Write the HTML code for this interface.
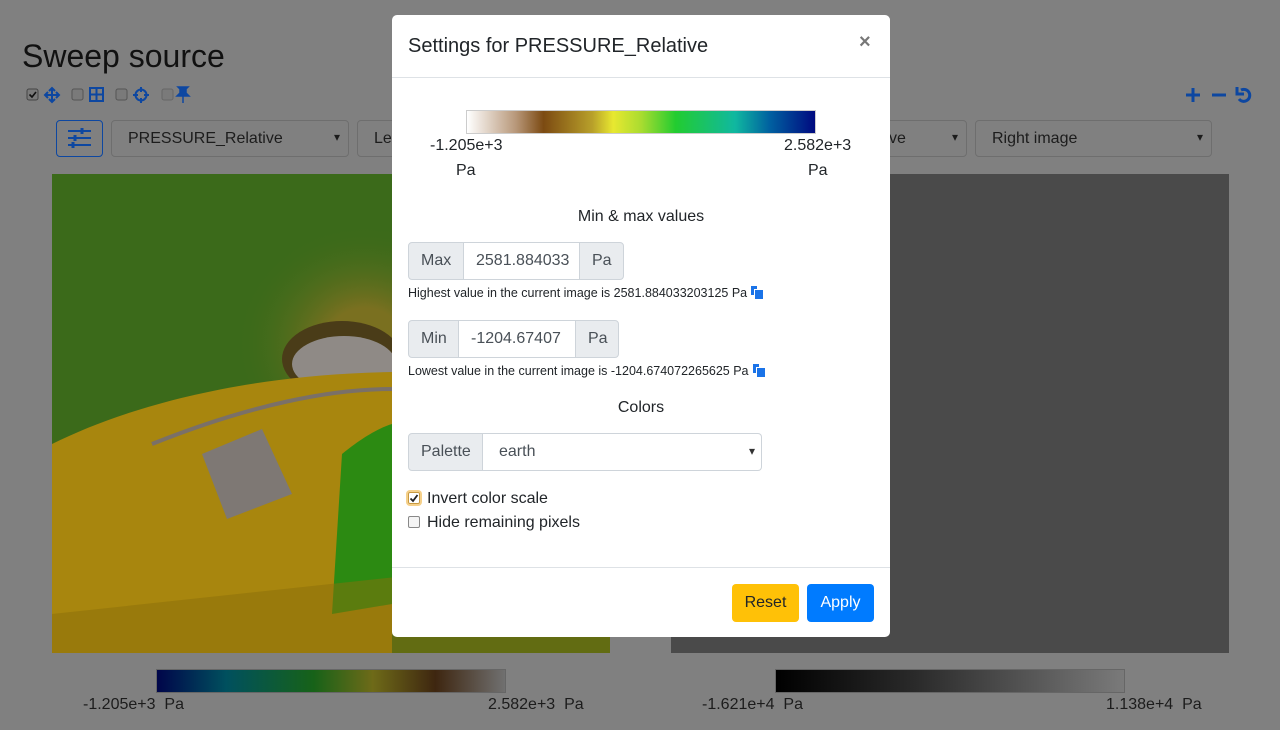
<!DOCTYPE html>
<html><head><meta charset="utf-8"><style>
*{box-sizing:border-box;margin:0;padding:0}
body{width:1280px;height:730px;overflow:hidden;background:#808080;font-family:"Liberation Sans",sans-serif;position:relative;color:#212529}
.abs{position:absolute}
.sel{position:absolute;border:1px solid #6e6e6e;border-radius:4px;height:37px;top:120px;font-size:16px;color:#1c1c1c;padding:9px 16px;background:#808080}
.sel:after{content:"▾";position:absolute;right:8px;top:9px;font-size:12px}
.modal{position:absolute;left:392px;top:15px;width:498px;height:622px;background:#fff;border-radius:5px}
.ig{position:absolute;left:16px;display:flex;height:38px;border-radius:4px;font-size:16px}
.ig span{display:block;border:1px solid #ced4da;padding:9px 12px;color:#495057;white-space:nowrap;overflow:hidden}
.ig .a{background:#e9ecef}
.small{position:absolute;left:16px;font-size:12.5px;color:#212529}
.copy{display:inline-block;width:11px;height:12px;position:relative;vertical-align:-1px;margin-left:4px}
.copy:before{content:"";position:absolute;left:0;top:0;width:6px;height:9px;background:#1a73e8}
.copy:after{content:"";position:absolute;left:3px;top:3px;width:8px;height:9px;background:#1a73e8;border-left:1px solid #fff;border-top:1px solid #fff}
</style></head><body>
<div class="abs" style="left:22px;top:38px;font-size:32px;color:#111">Sweep source</div>
<div class="abs" style="left:26px;top:86px;font-size:14px;color:#0d3d80">
<svg width="170" height="18" viewBox="0 0 170 18">
<rect x="1" y="3" width="11" height="11" rx="2" fill="#7a7a7a" stroke="#444"/><path d="M3.5 8.5l2.5 2.5 4-5" stroke="#111" stroke-width="1.6" fill="none"/>
<path d="M26 2v14M19 9h14M23 5l3-3 3 3M23 13l3 3 3-3M22 6l-3 3 3 3M30 6l3 3-3 3" stroke="#0d47a1" stroke-width="2" fill="none"/>
<rect x="46" y="3" width="11" height="11" rx="2" fill="#7a7a7a" stroke="#555"/>
<rect x="64" y="2" width="13" height="13" fill="none" stroke="#0d47a1" stroke-width="2"/><path d="M70.5 2v13M64 8.5h13" stroke="#0d47a1" stroke-width="2"/>
<rect x="90" y="3" width="11" height="11" rx="2" fill="#7a7a7a" stroke="#555"/>
<circle cx="115" cy="9" r="5.5" fill="none" stroke="#0d47a1" stroke-width="2"/><path d="M115 1v5M115 12v5M107 9h5M118 9h5" stroke="#0d47a1" stroke-width="2"/>
<rect x="136" y="3" width="11" height="11" rx="2" fill="#7a7a7a" stroke="#666"/>
<path d="M152 1h10l-2 2v4l3 3h-12l3-3v-4zM157 10v7" fill="#0d47a1" stroke="#0d47a1" stroke-width="1.5"/>
</svg></div>
<svg class="abs" style="left:1184px;top:86px" width="72" height="18"><path d="M2 9h14M9 2v14M28 9h14" stroke="#0d47a1" stroke-width="3"/><path d="M57 4a6 6 0 1 1 -2 9" stroke="#0d47a1" stroke-width="3" fill="none"/><path d="M53 1v7h7" fill="none" stroke="#0d47a1" stroke-width="3"/></svg>
<div class="abs" style="left:56px;top:120px;width:47px;height:37px;border:1px solid #0d47a1;border-radius:4px">
<svg width="45" height="35"><path d="M11 10h23M11 17h23M11 24h23" stroke="#0d47a1" stroke-width="2"/><path d="M25 7v6M18 14v6M16 21v6" stroke="#0d47a1" stroke-width="3"/></svg></div>
<div class="sel" style="left:111px;width:238px">PRESSURE_Relative</div>
<div class="sel" style="left:357px;width:60px">Le</div>
<div class="sel" style="left:870px;width:97px;padding-left:18px">ve</div>
<div class="sel" style="left:975px;width:237px">Right image</div>
<!-- left image -->
<div class="abs" style="left:52px;top:174px;width:558px;height:479px;background:#3b6a1a;overflow:hidden">
<svg width="558" height="479">
<defs><radialGradient id="g1" cx="0.55" cy="0.5" r="0.5"><stop offset="0.3" stop-color="#7a7020"/><stop offset="1" stop-color="#3b6a1a" stop-opacity="0"/></radialGradient></defs>
<ellipse cx="300" cy="170" rx="130" ry="120" fill="url(#g1)"/>
<ellipse cx="290" cy="185" rx="60" ry="38" fill="#4a3c18"/>
<ellipse cx="292" cy="190" rx="52" ry="28" fill="#8f8a86"/>
<path d="M0 270 C80 230 200 200 340 198 L340 479 L0 479 Z" fill="#a8860e"/>
<path d="M100 270 C200 230 280 215 340 215" stroke="#7a7068" stroke-width="4" fill="none"/>
<path d="M150 280 L210 255 L240 320 L175 345 Z" fill="#7e7874"/>
<path d="M290 280 C320 255 340 250 340 250 L340 430 L280 440 Z" fill="#2c8a12"/>
<path d="M0 440 L558 380 L558 479 L0 479Z" fill="#8a6e0a" opacity=".5"/>
</svg></div>
<div class="abs" style="left:671px;top:174px;width:558px;height:479px;background:#4a4a4a"></div>
<!-- bottom colorbars -->
<div class="abs" style="left:156px;top:669px;width:350px;height:24px;border:1px solid #666;background:linear-gradient(90deg,#00054a,#00505e 20%,#176218 45%,#6e6a18 62%,#3e2610 80%,#707070 100%)"></div>
<div class="abs" style="left:83px;top:696px;font-size:16px;color:#1c1c1c">-1.205e+3&nbsp; Pa</div>
<div class="abs" style="left:488px;top:696px;font-size:16px;color:#1c1c1c">2.582e+3&nbsp; Pa</div>
<div class="abs" style="left:775px;top:669px;width:350px;height:24px;border:1px solid #666;background:linear-gradient(90deg,#000,#2a2a2a 40%,#7a7a7a)"></div>
<div class="abs" style="left:702px;top:696px;font-size:16px;color:#1c1c1c">-1.621e+4&nbsp; Pa</div>
<div class="abs" style="left:1106px;top:696px;font-size:16px;color:#1c1c1c">1.138e+4&nbsp; Pa</div>
<!-- modal -->
<div class="modal">
<div class="abs" style="left:16px;top:20px;font-size:20px">Settings for PRESSURE_Relative</div>
<div class="abs" style="left:467px;top:16px;font-size:20px;font-weight:bold;color:#777">×</div>
<div class="abs" style="left:0;top:62px;width:498px;border-top:1px solid #dee2e6"></div>
<div class="abs" style="left:74px;top:95px;width:350px;height:24px;border:1px solid #ccc;background:linear-gradient(90deg,#fff,#b8987a 14%,#7c4a12 22%,#b8a02a 36%,#e8e830 42%,#aadc30 50%,#22cc30 60%,#10b8a0 77%,#0060a0 87%,#000a80 100%)"></div>
<div class="abs" style="left:38px;top:122px;font-size:16px">-1.205e+3</div>
<div class="abs" style="left:64px;top:147px;font-size:16px">Pa</div>
<div class="abs" style="left:392px;top:122px;font-size:16px">2.582e+3</div>
<div class="abs" style="left:416px;top:147px;font-size:16px">Pa</div>
<div class="abs" style="left:0;width:498px;text-align:center;top:193px;font-size:16px">Min &amp; max values</div>
<div class="ig" style="top:227px"><span class="a" style="border-radius:4px 0 0 4px;width:56px">Max</span><span style="width:115px;border-left:0;border-right:0">2581.884033</span><span class="a" style="border-radius:0 4px 4px 0;width:45px">Pa</span></div>
<div class="small" style="top:271px">Highest value in the current image is 2581.884033203125 Pa<i class="copy"></i></div>
<div class="ig" style="top:305px"><span class="a" style="border-radius:4px 0 0 4px;width:51px">Min</span><span style="width:116px;border-left:0;border-right:0">-1204.67407</span><span class="a" style="border-radius:0 4px 4px 0;width:44px">Pa</span></div>
<div class="small" style="top:349px">Lowest value in the current image is -1204.674072265625 Pa<i class="copy"></i></div>
<div class="abs" style="left:0;width:498px;text-align:center;top:384px;font-size:16px">Colors</div>
<div class="ig" style="top:418px"><span class="a" style="border-radius:4px 0 0 4px;width:75px">Palette</span><span style="width:279px;border-left:0;border-radius:0 4px 4px 0;position:relative;padding-left:16px">earth<b style="position:absolute;right:6px;top:10px;font-size:12px;font-weight:normal;color:#333">▾</b></span></div>
<div class="abs" style="left:16px;top:477px;width:12px;height:12px;border:1px solid #c89a40;border-radius:2px;box-shadow:0 0 0 2px #f5d08a"><svg width="10" height="10" style="position:absolute;left:0;top:0"><path d="M1.5 5.5l2.5 2.5 4.5-6" stroke="#222" stroke-width="1.8" fill="none"/></svg></div>
<div class="abs" style="left:35px;top:475px;font-size:16px">Invert color scale</div>
<div class="abs" style="left:16px;top:501px;width:12px;height:12px;border:1px solid #888;border-radius:2px;background:#f4f4f4"></div>
<div class="abs" style="left:35px;top:499px;font-size:16px">Hide remaining pixels</div>
<div class="abs" style="left:0;top:552px;width:498px;border-top:1px solid #dee2e6"></div>
<div class="abs" style="left:340px;top:569px;width:67px;height:38px;background:#ffc107;border-radius:4px;font-size:16px;text-align:center;line-height:38px">Reset</div>
<div class="abs" style="left:415px;top:569px;width:67px;height:38px;background:#007bff;border-radius:4px;font-size:16px;color:#fff;text-align:center;line-height:38px">Apply</div>
</div>
</body></html>
